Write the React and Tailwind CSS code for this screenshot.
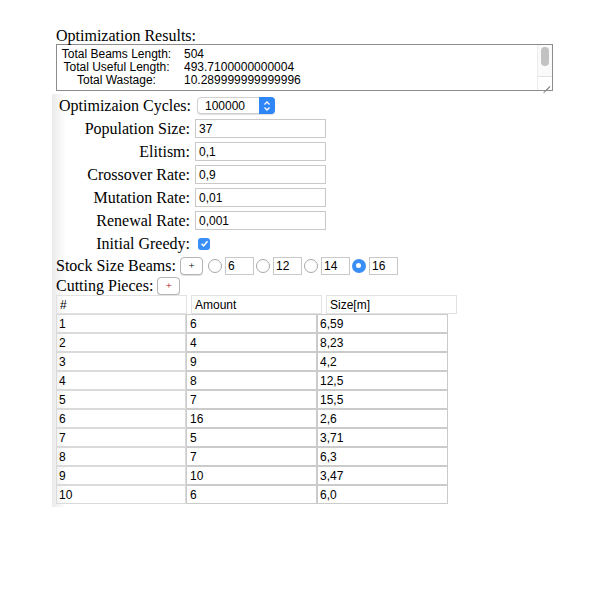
import React from "react";

const serif = { fontFamily: '"Liberation Serif", "Times New Roman", serif' };

const params = [
  ["Population Size:", "37"],
  ["Elitism:", "0,1"],
  ["Crossover Rate:", "0,9"],
  ["Mutation Rate:", "0,01"],
  ["Renewal Rate:", "0,001"],
];

const pieces = [
  ["1", "6", "6,59"],
  ["2", "4", "8,23"],
  ["3", "9", "4,2"],
  ["4", "8", "12,5"],
  ["5", "7", "15,5"],
  ["6", "16", "2,6"],
  ["7", "5", "3,71"],
  ["8", "7", "6,3"],
  ["9", "10", "3,47"],
  ["10", "6", "6,0"],
];

const stock = [
  ["6", false],
  ["12", false],
  ["14", false],
  ["16", true],
];

const Radio = ({ checked }) =>
  checked ? (
    <span className="flex h-[14px] w-[14px] items-center justify-center rounded-full bg-[#3a8ff7]">
      <span className="h-[5px] w-[5px] rounded-full bg-white" />
    </span>
  ) : (
    <span className="h-[14px] w-[14px] rounded-full border border-[#a8a8a8] bg-white" />
  );

const PlusButton = ({ red }) => (
  <span
    className={
      red
        ? "flex h-[18px] w-[23px] items-center justify-center rounded-[4px] border border-[#b5b5b5] bg-white text-[11px] leading-none text-[#a00] shadow-[0_1px_0_#ddd]"
        : "flex h-[18px] w-[23px] items-center justify-center rounded-[4px] border border-[#b5b5b5] bg-white text-[11px] leading-none text-black shadow-[0_1px_0_#ddd]"
    }
  >
    +
  </span>
);

const App = () => {
  return (
    <div
      className="h-[600px] w-[600px] bg-white pt-[27px] text-black"
      style={serif}
    >
      <div className="pl-[56px]">
        <div className="text-[16px] leading-[17px]">Optimization Results:</div>
        {/* results textarea */}
        <div className="flex h-[47px] w-[497px] border border-[#8c8c8c] font-['Liberation_Sans',Arial,sans-serif] text-[12px] leading-[13px]">
          <div className="flex-1 pl-[2px] pt-[3px]">
            {[
              ["Total Beams Length:", "504"],
              ["Total Useful Length:", "493.7100000000004"],
              ["Total Wastage:", "10.289999999999996"],
            ].map(([k, v]) => (
              <div key={k} className="flex">
                <span className="w-[115px] text-center">{k}</span>
                <span className="ml-[10px]">{v}</span>
              </div>
            ))}
          </div>
          <div className="flex w-[15px] flex-col border-l border-[#ececec] bg-[#fafafa]">
            <div className="flex-1 px-[3px] pt-[2px]">
              <div className="h-[19px] w-[8px] rounded-full bg-[#c2c2c2]" />
            </div>
            <div className="relative h-[14px] border-t border-[#e2e2e2] bg-white">
              <span className="absolute bottom-[3px] right-[2px] h-px w-[9px] origin-right -rotate-45 bg-[#888]" />
              <span className="absolute bottom-[3px] right-[2px] h-px w-[5px] origin-right -rotate-45 bg-[#888]" />
            </div>
          </div>
        </div>
      </div>

      <div className="ml-[52px] mt-[3px] w-[410px] bg-[linear-gradient(to_right,#ebebeb,#ffffff_14px)] pb-[3px] pl-[4px]">
        {/* cycles */}
        <div className="flex h-[23px] items-center pl-[3px]">
          <span className="text-[16px]">Optimizaion Cycles:</span>
          <span className="ml-[6px] flex h-[17px] w-[78px] items-center justify-between rounded-[4px] border border-[#d0d0d0] bg-white font-['Liberation_Sans',Arial,sans-serif] text-[12px] shadow-[0_1px_1px_#ddd]">
            <span className="pl-[7px]">100000</span>
            <span className="-mr-px flex h-[17px] w-[16px] flex-col items-center justify-center rounded-r-[4px] bg-[#2f86f6]">
              <svg width="8" height="12" viewBox="0 0 8 12" fill="none" stroke="white" strokeWidth="1.3">
                <path d="M1.5 4.5 L4 2 L6.5 4.5" />
                <path d="M1.5 7.5 L4 10 L6.5 7.5" />
              </svg>
            </span>
          </span>
        </div>

        {params.map(([label, value]) => (
          <div key={label} className="flex h-[23px] items-center">
            <span className="w-[134px] text-right text-[16px]">{label}</span>
            <span className="ml-[5px] flex h-[19px] w-[131px] items-center border border-[#c9c9c9] bg-white pl-[3px] font-['Liberation_Sans',Arial,sans-serif] text-[12px]">
              {value}
            </span>
          </div>
        ))}

        <div className="flex h-[23px] items-center">
          <span className="w-[134px] text-right text-[16px]">Initial Greedy:</span>
          <span className="ml-[8px] flex h-[12px] w-[12px] items-center justify-center rounded-[3px] bg-[#3a8ff7]">
            <svg width="9" height="9" viewBox="0 0 9 9" fill="none" stroke="white" strokeWidth="1.5">
              <path d="M1.5 4.8 L3.6 6.8 L7.5 2.2" />
            </svg>
          </span>
        </div>

        {/* stock sizes */}
        <div className="flex h-[21px] items-center">
          <span className="text-[16px]">Stock Size Beams:</span>
          <span className="ml-[4px]">
            <PlusButton />
          </span>
          {stock.map(([v, checked], i) => (
            <span key={v} className={i === 0 ? "ml-[5px] flex items-center" : "ml-[2px] flex items-center"}>
              <Radio checked={checked} />
              <span className="ml-[3px] flex h-[18px] w-[29px] items-center border border-[#c9c9c9] bg-white pl-[2px] font-['Liberation_Sans',Arial,sans-serif] text-[12px]">
                {v}
              </span>
            </span>
          ))}
        </div>

        <div className="flex h-[19px] items-center">
          <span className="text-[16px]">Cutting Pieces:</span>
          <span className="ml-[4px]">
            <PlusButton red />
          </span>
        </div>

        {/* table */}
        <div className="font-['Liberation_Sans',Arial,sans-serif] text-[12px]">
          <div className="flex h-[19px] gap-[4px]">
            {["#", "Amount", "Size[m]"].map((h) => (
              <span key={h} className="flex w-[131px] items-center border border-[#e2e2e2] pl-[3px]">
                {h}
              </span>
            ))}
          </div>
          {pieces.map(([n, a, s]) => (
            <div key={n} className="flex h-[19px]">
              <span className="flex w-[130px] items-center border border-[#dadada] pl-[2px]">{n}</span>
              <span className="flex w-[131px] items-center border border-[#cbcbcb] bg-white pl-[3px]">{a}</span>
              <span className="flex w-[131px] items-center border border-[#cbcbcb] bg-white pl-[2px]">{s}</span>
            </div>
          ))}
        </div>
      </div>
    </div>
  );
};

export default App;
